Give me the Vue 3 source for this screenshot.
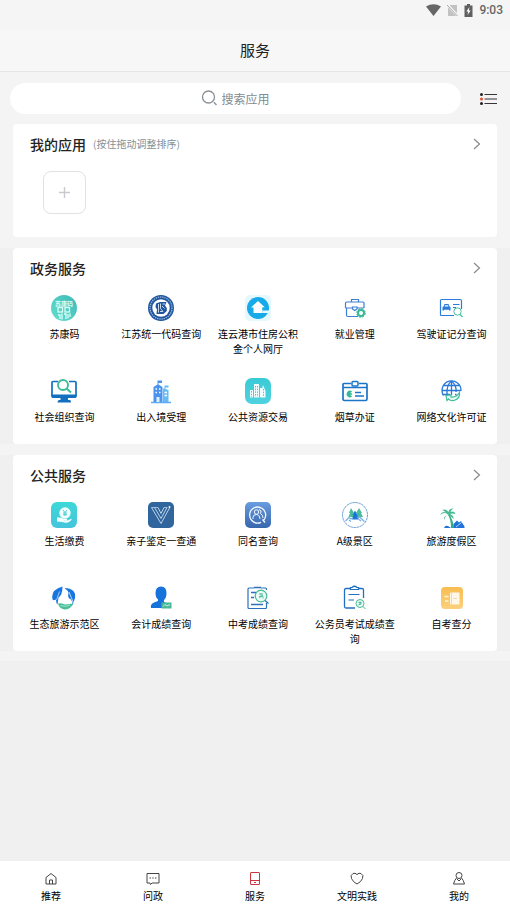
<script setup>
const sections = [
  {
    title: '政务服务',
    items: [
      { name: '苏康码', icon: 'health' },
      { name: '江苏统一代码查询', icon: 'code' },
      { name: '连云港市住房公积金个人网厅', icon: 'fund' },
      { name: '就业管理', icon: 'job' },
      { name: '驾驶证记分查询', icon: 'license' },
      { name: '社会组织查询', icon: 'org' },
      { name: '出入境受理', icon: 'border' },
      { name: '公共资源交易', icon: 'trade' },
      { name: '烟草办证', icon: 'tobacco' },
      { name: '网络文化许可证', icon: 'globe' }
    ]
  },
  {
    title: '公共服务',
    items: [
      { name: '生活缴费', icon: 'pay' },
      { name: '亲子鉴定一查通', icon: 'family' },
      { name: '同名查询', icon: 'namesake' },
      { name: 'A级景区', icon: 'scenic' },
      { name: '旅游度假区', icon: 'resort' },
      { name: '生态旅游示范区', icon: 'eco' },
      { name: '会计成绩查询', icon: 'account' },
      { name: '中考成绩查询', icon: 'exam' },
      { name: '公务员考试成绩查询', icon: 'civil' },
      { name: '自考查分', icon: 'self' }
    ]
  }
]
const tabs = [
  { name: '推荐', icon: 'home' },
  { name: '问政', icon: 'chat' },
  { name: '服务', icon: 'service', active: true },
  { name: '文明实践', icon: 'heart' },
  { name: '我的', icon: 'me' }
]
</script>

<template>
  <div class="page">
    <div class="status">
      <svg width="15" height="12" viewBox="0 0 15 12"><path d="M0 2.5Q7.500-1.800 15 2.500L7.500 12Z" fill="#666" /></svg>
      <svg width="11" height="12" viewBox="0 0 11 12"><path d="M3.500 1H10V12H1V4Z" fill="#c2c2c2" /><path d="M0 0.500L11 12" stroke="#f5f5f5" stroke-width="2.500" /><path d="M0 1L10.500 12" stroke="#aaa" /></svg>
      <svg width="9" height="13" viewBox="0 0 9 13"><path d="M3 0H6V1.500H8.500V13H0.500V1.500H3Z" fill="#606060" /><path d="M5.500 3L2.300 7.500H4.200L3.500 11L6.700 6.500H4.800Z" fill="#fff" /></svg>
      <span class="time">9:03</span>
    </div>
    <header class="title"><h1>服务</h1></header>

    <main>
      <div class="search-row">
        <label class="search">
          <svg width="17" height="17" viewBox="0 0 17 17" fill="none" stroke="#8c9196" stroke-width="1.300"><circle cx="7.500" cy="7" r="6" /><path d="M12.800 12.300L15.500 15" /></svg>
          <input type="text" placeholder="搜索应用" aria-label="搜索应用" />
        </label>
        <button class="menu" type="button" aria-label="菜单">
          <svg width="17" height="12" viewBox="0 0 17 12"><path d="M4.500 1.500H17M4.500 6H17M4.500 10.500H17" stroke="#39333a" stroke-width="1.200" /><circle cx="1.500" cy="1.500" r="1.500" fill="#222" /><circle cx="1.500" cy="6" r="1.500" fill="#e2512f" /><circle cx="1.500" cy="10.500" r="1.500" fill="#222" /></svg>
        </button>
      </div>

      <section class="band mine">
        <div class="card">
          <div class="head">
            <h2>我的应用</h2><small>(按住拖动调整排序)</small>
            <button class="more" type="button" aria-label="更多"><svg width="8" height="12" viewBox="0 0 8 12" fill="none" stroke="#8a8a8a" stroke-width="1.200"><path d="M1 1L6.500 6L1 11" /></svg></button>
          </div>
          <div class="grid">
            <button class="add" type="button" aria-label="添加应用"><svg width="11" height="11" viewBox="0 0 11 11"><path d="M5.500 0V11M0 5.500H11" stroke="#c9c9d0" stroke-width="1.400" /></svg></button>
          </div>
        </div>
      </section>

      <section v-for="s in sections" :key="s.title" class="band">
        <div class="card">
          <div class="head">
            <h2>{{ s.title }}</h2>
            <button class="more" type="button" aria-label="更多"><svg width="8" height="12" viewBox="0 0 8 12" fill="none" stroke="#8a8a8a" stroke-width="1.200"><path d="M1 1L6.500 6L1 11" /></svg></button>
          </div>
          <div class="grid">
            <a v-for="i in s.items" :key="i.name" class="item" href="#">
              <svg class="icon" viewBox="0 0 26 26" fill="none">
                <g v-if="i.icon === 'health'">
                  <circle cx="13" cy="13" r="13" fill="url(#gHealth)" />
                  <text x="13" y="10.500" text-anchor="middle" font-size="6" font-weight="700" fill="#d9fff8">苏康码</text>
                  <g stroke="#d9fff8" stroke-width="1.300"><rect x="7" y="12.500" width="4.500" height="4.500" /><rect x="14" y="12.500" width="4.500" height="4.500" /><path d="M7 20H9V24M11 18.500V24.500M13 19H15V24M17 19V23.500M19 18.500V22" /></g>
                </g>
                <g v-else-if="i.icon === 'code'">
                  <circle cx="13" cy="13" r="13" fill="#1f569f" />
                  <circle cx="13" cy="13" r="11" stroke="#9fb9dc" stroke-width="1.300" stroke-dasharray="1.300 0.900" />
                  <circle cx="13" cy="13" r="8.700" fill="#fff" />
                  <path d="M8 8.500L12 7H18.500L17 10.500L18.800 13V16L15.500 19H8.500L9 14.500L7.500 12Z" fill="#1f569f" />
                  <path d="M10.500 9V17.500M12.500 8.500V13.500L15 16.500H12M14.500 9H17M14 11L16.500 13.500" stroke="#d9e5f4" stroke-width="0.900" />
                </g>
                <g v-else-if="i.icon === 'fund'">
                  <rect width="26" height="26" rx="5" fill="#e6f7fe" />
                  <circle cx="13" cy="13" r="11" fill="#16abe8" />
                  <path d="M13 6L20 12.500H17.500V18H8.500V12.500H6Z" fill="#fff" />
                  <path d="M17.500 12.500H24V15H17.500Z" fill="#16abe8" />
                  <path d="M17.500 15.500H26V18H17.500Z" fill="#e6f7fe" />
                </g>
                <g v-else-if="i.icon === 'job'" stroke="#3d7fd2" stroke-width="1.200">
                  <path d="M9.500 7V4.500H16.500V7M3.500 13V8Q3.500 7 4.500 7H21Q22 7 22 8V13M4.500 13.500V20Q4.500 21.500 6 21.500H16M3.500 13H10.500M15 13H22" />
                  <path d="M10.500 12H15V14L12.750 15.500L10.500 14Z" />
                  <circle cx="19" cy="18" r="3" stroke="#3bb996" stroke-width="2" /><circle cx="19" cy="18" r="4.300" stroke="#3bb996" stroke-width="1" stroke-dasharray="2 1.370" />
                </g>
                <g v-else-if="i.icon === 'license'">
                  <path d="M15 20.500H2Q1.500 20.500 1.500 20V5.500Q1.500 4.500 2.500 4.500H21Q22.500 4.500 22.500 6V14M14 9.500H20.500M14 12.500H17" stroke="#2b7bdd" stroke-width="1.200" />
                  <path d="M3.500 15.500V12L4.500 11.500L5.500 9H9.500L10.500 11.500L11.500 12V15.500H10V14.800H5V15.500ZM6 10.200L5.600 11.500H9.400L9 10.200Z" fill="#2b7bdd" />
                  <circle cx="18.500" cy="16.500" r="3.700" stroke="#45bfa0" fill="#fff" /><path d="M21 19.500L23.500 22" stroke="#45bfa0" stroke-width="1.300" />
                </g>
                <g v-else-if="i.icon === 'org'">
                  <path d="M7 3.500H2Q1 3.500 1 4.500V18H25V4.500Q25 3.500 24 3.500H18" stroke="#146fc0" stroke-width="1.700" />
                  <path d="M0.500 16.500H25.500V18.500Q25.500 20 24 20H17V22H19Q20 22 20 24.500H6.500Q6.500 22 8 22H9.500V20H2Q0.500 20 0.500 18.500Z" fill="#146fc0" />
                  <circle cx="12" cy="7" r="5" stroke="#3dbc98" stroke-width="1.900" /><path d="M15.500 10.500L20 14.500" stroke="#3dbc98" stroke-width="2" />
                </g>
                <g v-else-if="i.icon === 'border'">
                  <path d="M15 10.500H16.500V7.500H20.500V9.500H17.500V11L20.500 12V24H15Z" fill="#63bdf2" />
                  <path d="M5.500 9L9.500 6.500V2.500H14V5H10.500V6.500L14.500 9V24H5.500Z" fill="#4a94f0" />
                  <path d="M3 24.500H23" stroke="#5daaf5" stroke-width="1.500" />
                  <path d="M7.500 11H9M11 11H12.500M7.500 14.500H9M11 14.500H12.500M16.500 14.500H19M16.500 17.500H19" stroke="#fff" stroke-width="1.300" /><path d="M8.500 24V19H11.500V24Z" fill="#ddf2ff" />
                </g>
                <g v-else-if="i.icon === 'trade'">
                  <rect width="26" height="26" rx="7" fill="url(#gTrade)" />
                  <path d="M5 19.500V12H8V19.500ZM9 19.500V6H14V19.500ZM15 19.500V10H17V19.500ZM16.500 19.500V13L18 7L20.500 13V19.500Z" fill="#effdff" />
                  <path d="M6.500 13V19M10.500 8V19M12.500 8V19M18.500 11V19" stroke="#42cbd9" stroke-width="1" stroke-dasharray="1.500 1.200" />
                </g>
                <g v-else-if="i.icon === 'tobacco'">
                  <path d="M9 5.500H2Q1 5.500 1 6.500V21Q1 22.500 2.500 22.500H23.500Q25 22.500 25 21V6.500Q25 5.500 24 5.500H17M1 9.500H25" stroke="#1b75c8" stroke-width="1.700" />
                  <rect x="10" y="3.500" width="6" height="4.500" rx="1" stroke="#1b75c8" stroke-width="1.500" fill="#fff" />
                  <path d="M9.500 14A2.500 2.500 0 1 0 9.500 18M7.500 13V19M6 16H10" stroke="#30b99b" stroke-width="1.700" /><path d="M13 14.500H19M13 18H22" stroke="#1b75c8" stroke-width="1.500" />
                </g>
                <g v-else-if="i.icon === 'globe'">
                  <g stroke="#2879db" stroke-width="1.300"><path d="M4.500 17.500A9.500 9.500 0 1 1 22 13M12.500 3V17M3 12.500H22M5 7.500H20.500" /><path d="M12.500 3Q7.500 7 8 16M12.500 3Q18 8 17 14M4 16.500H11M16 16.500H17.500" /></g>
                  <path d="M7 17.500L12 17V19Q17.500 19.500 20.500 14.500Q21.500 20.500 15 22.500Q11 23 9.500 21L8 22.500Z" stroke="#42bc98" stroke-width="1.200" fill="#e6f8f2" />
                </g>
                <g v-else-if="i.icon === 'pay'">
                  <rect width="26" height="26" rx="6" fill="url(#gPay)" />
                  <circle cx="14" cy="11" r="5.700" fill="#effeff" /><path d="M12 8L14 10.500L16 8M14 10.500V14M12 11H16M12 12.700H16" stroke="#3fcbd3" stroke-width="0.900" />
                  <path d="M6 15.500H9Q11 15.500 13 17H16Q17 18.500 15 18.500H12.500Q16 19.500 20.500 16.500Q21 18 18 20Q15.500 21.500 11 20L6 19.500Z" fill="#f2ffff" />
                </g>
                <g v-else-if="i.icon === 'family'">
                  <rect width="26" height="26" rx="5" fill="#31659e" />
                  <path d="M3.500 5.500L13 21.500L21.500 6M6.500 5.500L13 16.500L19 5.500M10 5.500L13 11.500L16 5.500" stroke="#bcd2e8" stroke-width="1" /><circle cx="21.500" cy="5" r="0.900" fill="#fff" /><path d="M3.500 5.500H10M16 5.500H19" stroke="#bcd2e8" stroke-width="0.800" />
                </g>
                <g v-else-if="i.icon === 'namesake'">
                  <rect width="26" height="26" rx="5" fill="url(#gName)" />
                  <path d="M18.500 18.500A8 8 0 1 0 16 20.300M17.500 17.500L20 20.500" stroke="#f4f8ff" stroke-width="1.300" />
                  <circle cx="11.500" cy="10" r="2.200" stroke="#f4f8ff" /><path d="M8 17V15.500Q8 12.500 11.500 12.500Q14.500 12.500 15 17M14 7.500Q17.500 8.500 15.500 11.500Q18 13 18 16" stroke="#f4f8ff" />
                </g>
                <g v-else-if="i.icon === 'scenic'">
                  <circle cx="13" cy="13" r="12.500" stroke="#3c7fc5" stroke-width="0.800" stroke-dasharray="2.500 0.600" />
                  <path d="M9 6L12 11L11 11L13 15H6.500L8 11H7ZM17 6L20 11H19L21 15H14L15 11H14Z" fill="#49bc9b" />
                  <path d="M13 8.500L15.500 13H15L17 17.500H10L11.500 13H10.500Z" fill="#1e73d8" />
                  <path d="M3.500 19L7 15.500L9 17L11 15.500M15 16L17.500 15L22.500 19.500M7 18L9 19.500M17 17.500L19 19" stroke="#6fb0e8" stroke-width="1.200" />
                </g>
                <g v-else-if="i.icon === 'resort'">
                  <path d="M9 13Q12 17 12 26H15Q14 18 10.500 12.500Z" fill="#35ad87" />
                  <path d="M9.500 13Q6 9 1 13Q3 9 7 10.500Q4.500 8 3 8Q7 6.500 9.500 10Q10 6 14.500 6.500Q12 7.500 11.500 10Q15 8.500 16.500 12Q13 11 11 12Q15 13.500 14.500 17Q12 14 9.500 13Q6 13 5.500 18Q3.500 14 9.500 13Z" fill="#45b993" />
                  <path d="M5 26Q6 23 9 24L12 26ZM14.500 26V22L18 18.500L20 20.500L22 19L25.500 24.500V26Z" fill="#1e74dc" /><path d="M17 25L22.500 20.500" stroke="#fff" stroke-width="0.700" />
                </g>
                <g v-else-if="i.icon === 'eco'">
                  <path d="M11.500 1.500Q11.500 10 7.500 12.500L6.500 19.500Q5 18 5 14.500Q1.500 16 1.500 14Q-0.500 5 11.500 1.500Z" fill="#1876df" /><path d="M5.500 15L8.500 6.500" stroke="#fff" stroke-width="0.600" />
                  <path d="M13.500 3Q25.500 3.500 24 13L21.500 20.500Q22 17 20 14.500Q16 13 17.500 8Q17 5.500 13.500 3Z" fill="#1876df" /><path d="M18 7L22.500 18" stroke="#fff" stroke-width="0.700" />
                  <path d="M7 18.500Q9 17.500 14 19.500L22.500 18.500Q19.500 24.500 13.500 24.500Q8 23.500 7 18.500Z" fill="#49bf9a" /><path d="M9.500 20.500Q14 22.500 19 20" stroke="#c9f1e4" stroke-width="0.700" />
                </g>
                <g v-else-if="i.icon === 'account'">
                  <path d="M7.500 8Q7.500 1.500 13 1.500Q18.500 1.500 18.500 8Q18.500 13 16 15V17L20.500 19V23H3Q2 19 6 17.500L10 16V14.500Q7.500 12.500 7.500 8Z" fill="#1773dc" />
                  <rect x="13.500" y="17.500" width="10" height="6" fill="#48b997" /><path d="M15 21.500L17 19.500L19 21L22 19.500" stroke="#caefe3" />
                </g>
                <g v-else-if="i.icon === 'exam'">
                  <path d="M9 3H4Q3 3 3 4V22.500Q3 23.500 4 23.500H20.500Q21.500 23.500 21.500 22.500V18M16 3H20.500Q21.500 3 21.500 4V5" stroke="#2c70bc" stroke-width="1.200" /><path d="M9 2.500H16M6 7.500H11M6 12.500H9M6 19.500H18" stroke="#2c70bc" stroke-width="1.300" />
                  <circle cx="16" cy="11" r="5.800" fill="#e9f9f3" stroke="#48b997" stroke-width="1.200" /><path d="M14 9H18M16 8V12M14 13L18 10M14 11.500H18V13.500" stroke="#48b997" stroke-width="0.800" /><path d="M20 15.500L23.500 18.500" stroke="#2c70bc" stroke-width="1.300" />
                </g>
                <g v-else-if="i.icon === 'civil'">
                  <path d="M8.500 3.500H4Q2.500 3.500 2.500 5V21.500Q2.500 23 4 23H13M17 3.500H20Q21.500 3.500 21.500 5V13" stroke="#226fc0" stroke-width="1.300" /><path d="M8.500 2.500H10Q12.500 0 15 2.500H16.500V4.500H8.500ZM6.500 9.500H17.500M6.500 15H12" stroke="#226fc0" stroke-width="1.200" />
                  <circle cx="18" cy="18.500" r="4" fill="#e9f9f3" stroke="#48b997" /><path d="M16.500 17.500H19.500M18 16.500V20M16.500 20L19.500 18.500M21 21.500L23.500 24" stroke="#48b997" />
                </g>
                <g v-else>
                  <rect x="2" y="2" width="22" height="22" rx="4" fill="url(#gSelf)" />
                  <rect x="11" y="7.500" width="9.500" height="12" rx="1" fill="#fff8e9" /><path d="M12.500 7.500V19.500M14.500 13.500H18" stroke="#eed0a0" stroke-width="0.800" /><path d="M5.500 11.500H9.500M6 16H9.500" stroke="#fff5df" stroke-width="1.500" />
                </g>
              </svg>
              <span>{{ i.name }}</span>
            </a>
          </div>
        </div>
      </section>
    </main>

    <nav class="tabs">
      <a v-for="t in tabs" :key="t.name" href="#" :class="{ active: t.active }">
        <svg width="14" height="14" viewBox="0 0 14 14" fill="none" stroke="currentColor">
          <path v-if="t.icon === 'home'" d="M2 5.500L7 1.500L12 5.500V12H2ZM5.500 12V8H8.500V12" />
          <path v-else-if="t.icon === 'chat'" d="M1 1.500H13V11H6L4.500 12.500L4 11H1ZM3.500 6H5M6.300 6H7.700M9 6H10.500" />
          <path v-else-if="t.icon === 'service'" d="M3 0.500H11Q11.500 0.500 11.500 1V12Q11.500 12.500 11 12.500H3Q2.500 12.500 2.500 12V1Q2.500 0.500 3 0.500ZM2.500 8.500H11.500M6 10.500H8" />
          <path v-else-if="t.icon === 'heart'" d="M7 2.500Q5 0.500 3 1.500Q0 3 1.500 6.500Q3 10 7 12Q11 10 12.500 6.500Q14 3 11 1.500Q9 0.500 7 2.500Z" />
          <path v-else d="M7 0.500A3 3 0 0 1 7 6.500A3 3 0 0 1 7 0.500ZM4.500 6Q2.500 8 1.500 12H12.500Q11.500 8 9.500 6M5 7L7 9L9 7" />
        </svg>
        <span>{{ t.name }}</span>
      </a>
    </nav>

    <svg class="defs" width="0" height="0" aria-hidden="true">
      <defs>
        <linearGradient id="gHealth" x1="0" y1="1" x2="1" y2="0"><stop stop-color="#66dfce" /><stop offset="1" stop-color="#3eb8b7" /></linearGradient>
        <linearGradient id="gTrade" x1="0" y1="0" x2="0" y2="1"><stop stop-color="#3acad5" /><stop offset="1" stop-color="#4fd2e0" /></linearGradient>
        <linearGradient id="gPay" x1="0" y1="0" x2="0" y2="1"><stop stop-color="#3dd8d8" /><stop offset="1" stop-color="#45c4dc" /></linearGradient>
        <linearGradient id="gName" x1="0" y1="0" x2="0" y2="1"><stop stop-color="#6a9ddf" /><stop offset="1" stop-color="#3666ac" /></linearGradient>
        <linearGradient id="gSelf" x1="0" y1="0" x2="0" y2="1"><stop stop-color="#f8bd50" /><stop offset="1" stop-color="#fbd07c" /></linearGradient>
      </defs>
    </svg>
  </div>
</template>

<style>
body {
  background: #f0f0f0;
}
</style>

<style scoped>
.page {
  display: flex;
  flex-direction: column;
  min-height: 100vh;
  color: #000;
  font-family: "Noto Sans CJK SC", "Noto Sans", sans-serif;
}
h1,
h2 {
  margin: 0;
}
button {
  display: grid;
  place-items: center;
  padding: 0;
  border: 0;
  background: none;
}
a {
  color: inherit;
  text-decoration: none;
}
svg {
  display: block;
  flex: none;
}
.defs {
  position: absolute;
}
.status {
  display: flex;
  align-items: center;
  justify-content: flex-end;
  gap: 6px;
  height: 20px;
  padding: 0 7px 10px;
  background: #f5f5f5;
}
.time {
  color: #666;
  font: 500 12px/20px Roboto, sans-serif;
}
.title {
  display: grid;
  place-items: center;
  height: 40px;
  padding-bottom: 1px;
  border-bottom: 1px solid #e6e6e6;
  background: #f7f7f7;
}
h1 {
  color: #222;
  font-size: 15px;
  font-weight: 400;
  line-height: 24px;
}
main {
  display: flex;
  flex-direction: column;
  gap: 11px;
  padding: 11px 0 10px;
  background: #f4f4f4;
}
.search-row {
  display: flex;
  align-items: center;
  gap: 19px;
  padding: 0 13px 0 10px;
}
.search {
  display: flex;
  flex: 1;
  align-items: center;
  justify-content: center;
  gap: 4px;
  height: 31px;
  border-radius: 16px;
  background: #fff;
}
.search input {
  width: 49px;
  height: 20px;
  padding: 0;
  border: 0;
  outline: 0;
  background: none;
  color: #333;
  font: 12px/20px "Noto Sans CJK SC", sans-serif;
}
.search input::placeholder {
  color: #7f8a92;
}
.band {
  padding: 0 13px;
  background: #f0f0f0;
}
.mine {
  margin-top: -1px;
  background: none;
}
.card {
  padding-bottom: 4px;
  border-radius: 4px;
  background: #fff;
}
.head {
  display: flex;
  align-items: center;
  gap: 7px;
  height: 40px;
  padding: 0 16px 0 17px;
}
h2 {
  color: #222;
  font-size: 14px;
  font-weight: 500;
  line-height: 20px;
}
small {
  color: #848f96;
  font-size: 10px;
  line-height: 16px;
}
.more {
  margin-left: auto;
}
.grid {
  display: grid;
  grid-template-columns: repeat(5, 1fr);
  grid-auto-rows: minmax(62px, auto);
  gap: 21px 0;
  margin: 7px -3px 0 3px;
  justify-items: center;
}
.item {
  display: flex;
  flex-direction: column;
  align-items: center;
  gap: 5px;
}
.icon {
  width: 26px;
  height: 26px;
}
.item span {
  max-width: 82px;
  font-size: 10px;
  line-height: 15px;
  text-align: center;
}
.add {
  width: 43px;
  height: 43px;
  border: 1px solid #e2e2e6;
  border-radius: 8px;
}
.tabs {
  display: grid;
  grid-template-columns: repeat(5, 1fr);
  margin-top: auto;
  padding: 11px 0 4px;
  background: #fff;
}
.tabs a {
  display: flex;
  flex-direction: column;
  align-items: center;
  gap: 2px;
}
.tabs svg {
  color: #444;
}
.tabs .active svg {
  color: #cf3440;
}
.tabs span {
  font-size: 10px;
  line-height: 16px;
}
</style>
